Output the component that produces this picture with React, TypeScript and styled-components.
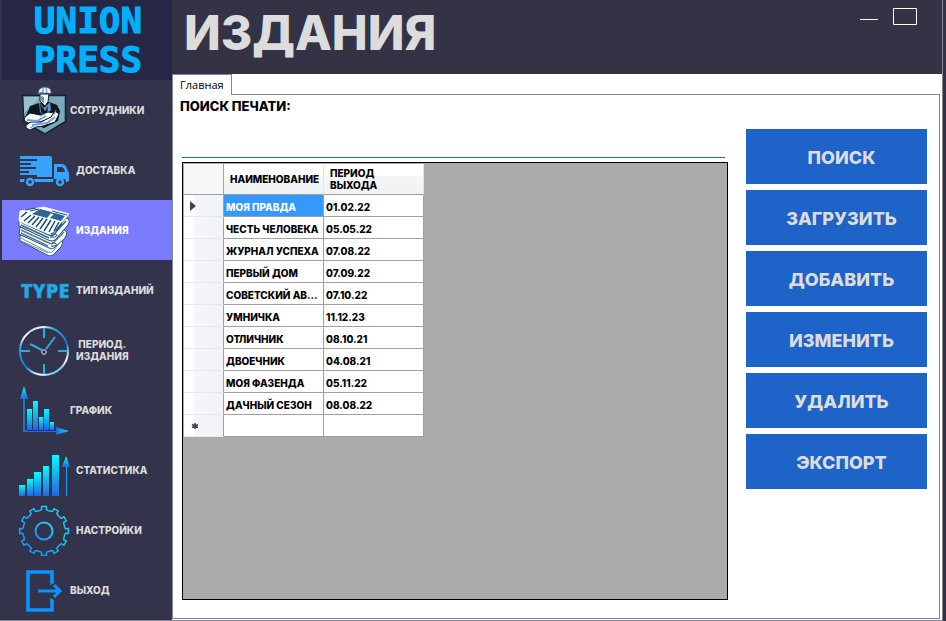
import React from "react";
import styled, { createGlobalStyle } from "styled-components";

const display = '"Inter", "Liberation Sans", sans-serif';

const GlobalStyle = createGlobalStyle`
  * { box-sizing: border-box; }
  body { margin: 0; background: #333345; font-family: ${display}; }
  button, input { font-family: inherit; }
`;

const Window = styled.div`
  display: flex;
  min-height: 100vh;
  padding: 0 3px 1px 0;
  background: #333345;
`;
const Sidebar = styled.aside`
  flex: 0 0 172px;
  display: flex;
  flex-direction: column;
  padding-left: 2px;
  border-bottom: 1px solid #85858f;
  background: #33334b;
`;
const Brand = styled.div`
  height: 80px;
  padding: 1px 0 0 2px;
  background: #262645;
  color: #00b0ff;
  font: 700 36px/39px "DejaVu Sans Mono", monospace;
  text-align: center;
  -webkit-text-stroke: 1px #00b0ff;
`;
const BrandLine = styled.div``;
const Nav = styled.nav`
  display: flex;
  flex-direction: column;
`;
const NavButton = styled.button<{ $active?: boolean }>`
  display: flex;
  align-items: center;
  height: 60px;
  padding: 0 0 0 16px;
  border: 0;
  background: ${(p) => (p.$active ? "#7b7bff" : "transparent")};
  color: ${(p) => (p.$active ? "#ffffff" : "#dcdcdc")};
  text-align: center;
  svg { flex: none; }
`;
const NavLabel = styled.span<{ $near?: boolean }>`
  margin-left: ${(p) => (p.$near ? 0 : 6)}px;
  font-size: 10px;
  font-weight: 800;
  line-height: 12px;
  white-space: pre-line;
`;
const Main = styled.main`
  flex: 1;
  min-width: 0;
  display: flex;
  flex-direction: column;
  border-right: 1px solid #85858f;
  border-bottom: 1px solid #85858f;
`;
const Header = styled.header`
  display: flex;
  justify-content: space-between;
  height: 74px;
  padding: 0 25px 0 12px;
`;
const Title = styled.h1`
  margin: 0;
  color: #dcdcdc;
  font-size: 48px;
  font-weight: 800;
  line-height: 66px;
`;
const WindowControls = styled.div`
  display: flex;
  gap: 15px;
  padding-top: 8px;
`;
const WindowButton = styled.button`
  height: 17px;
  padding: 0;
  border: 0;
  background: none;
  svg { display: block; }
`;
const Tabs = styled.section`
  flex: 1;
  display: flex;
  flex-direction: column;
  padding: 0 2px 1px 0;
  background: #fff;
`;
const TabStrip = styled.div`
  display: flex;
`;
const Tab = styled.button`
  height: 21px;
  margin-bottom: -1px;
  padding: 0 7px;
  border: 1px solid #828790;
  border-bottom: 0;
  background: #fff;
  color: #000;
  font: 11px/18px "Open Sans", "Noto Sans", sans-serif;
  z-index: 1;
`;
const Panel = styled.div`
  flex: 1;
  display: flex;
  padding: 0 12px 18px 7px;
  gap: 18px;
  border: 1px solid #828790;
`;
const Content = styled.div`
  flex: 1;
  min-width: 0;
  display: flex;
  flex-direction: column;
`;
const SearchLabel = styled.label`
  padding-top: 3px;
  font-size: 13px;
  font-weight: 800;
  line-height: 16px;
`;
const SearchInput = styled.input`
  width: calc(100% - 5px);
  height: 44px;
  margin: 0 2px 4px;
  padding: 20px 0 0;
  border: 0;
  border-bottom: 1px solid #1e63c8;
  outline: 0;
  font-size: 13px;
  font-weight: 800;
`;
const GridArea = styled.div`
  flex: 1;
  margin-left: 2px;
  padding: 1px;
  border: 1px solid #000;
  background: #ababab;
`;
const Table = styled.table`
  width: 240px;
  table-layout: fixed;
  border-collapse: separate;
  border-spacing: 0;
  font-size: 10px;
  font-weight: 800;
  line-height: 12px;
`;
const HeadCell = styled.th`
  height: 31px;
  padding: 0 0 0 6px;
  border-right: 1px solid #e2e4e8;
  border-bottom: 1px solid #a0a0a0;
  background: linear-gradient(#fff 0 40%, #f5f6f8 41%, #f0f1f3);
  text-align: left;
  font-weight: 800;
`;
const CornerCell = styled.td`
  border-right: 1px solid #a0a0a0;
  border-bottom: 1px solid #a0a0a0;
  background: #f6f7f9;
`;
const MarkCell = styled.td`
  height: 22px;
  padding: 0 0 0 6px;
  border-right: 1px solid #a0a0a0;
  border-bottom: 1px solid #e6e8ec;
  background: linear-gradient(90deg, #fff 0 25%, #f5f6f9 26%, #f2f3f6);
  svg { display: block; }
`;
const Cell = styled.td<{ $selected?: boolean }>`
  height: 22px;
  padding: 2px 0 0 2px;
  border-right: 1px solid #a0a0a0;
  border-bottom: 1px solid #a0a0a0;
  background: ${(p) => (p.$selected ? "#3399ff" : "#fff")};
  color: ${(p) => (p.$selected ? "#fff" : "#000")};
  white-space: nowrap;
`;
const Actions = styled.div`
  flex: 0 0 181px;
  display: flex;
  flex-direction: column;
  gap: 6px;
  padding-top: 34px;
`;
const ActionButton = styled.button`
  height: 55px;
  padding: 2px 0 0 10px;
  border: 0;
  background: #1e63c8;
  color: #dcdcdc;
  font-size: 18px;
  font-weight: 800;
`;

const Worker = () => (
  <svg width="52" height="52" viewBox="0 0 52 52">
    <path d="M4.500 11.500h43v26L27 50 6 38z" fill="#79a9bd" stroke="#17232c" strokeWidth="1.5" />
    <path d="M6 13h16L6 30z" fill="#98bfce" />
    <path d="m21 19-9 3-5 12 4 5 15 5 14-7 2-10-3-6-8-3z" fill="#10161e" />
    <path d="m21 18 5 6 6-6 1 8-6 7-5-5z" fill="#5c96cf" />
    <path d="m22 20 5 7 3-5-1 8-2 2-4-4z" fill="#10161e" />
    <path d="M22 10h9l-1 8-3 4-5-5z" fill="#f3f5f6" stroke="#10161e" />
    <path d="m23 12 3 1v7l-3-4z" fill="#6095bc" />
    <path d="M20 10q0-7 7-7t6 7l-4-1z" fill="#eef3f5" stroke="#355775" />
    <path d="M25 3v5m-4 1 5-1m2-4 1 4" stroke="#5681a5" />
    <path d="m7 33 5-4 10 2 8-3 7 1-2 4-13 5-12 1-4-3z" fill="#fff" stroke="#10161e" />
    <path d="m8 41 5-3 10 0 10-5 4-6 4 3-4 8-12 4-7 1-6 3-4-2z" fill="#fff" stroke="#10161e" />
    <path d="m9 36 10 1 9-5m-14 9 15-2 8-6" fill="none" stroke="#67a3dd" strokeWidth="2" />
    <path d="m7 29 4-4m27 1-2 5M22 32l5-2m-15 14 4-2" stroke="#4f91d0" />
  </svg>
);

const Truck = () => (
  <svg width="52" height="52" viewBox="0 -1 52 52" fill="#35a3ff">
    <path d="M2 11h30q2 0 2 2v19H19v-2H2v-2h9v-2H2v-2h16v-2H2v-2h11v-2H2v-2h17v-2H2zM36 19h7q5 0 6 5l2 4v6H36zM2 34h5a6 6 0 0 0-1 3H2zm14 0h20a6 6 0 0 0-1 3H17zm31 0h4v2l-2 1h-1z" />
    <path d="M39 22h4q3 0 4 5h-8z" fill="#33334b" />
    <circle cx="12" cy="37" r="3" fill="none" stroke="#35a3ff" strokeWidth="2.5" />
    <circle cx="42" cy="37" r="3" fill="none" stroke="#35a3ff" strokeWidth="2.5" />
  </svg>
);

const Papers = () => (
  <svg width="52" height="52" viewBox="0 0 52 52" strokeLinejoin="round">
    <path d="M2 31 35 43l7-8q5 0 1 8l-8 8q-3 2-6 0L2 37z" fill="#fff" stroke="#245576" />
    <path d="m3 34 27 14q4 2 6-2l6-8M3 37l27 12" fill="none" stroke="#6c91a5" />
    <path d="m2 23 32 14 12-11q5 1 1 8L36 44q-3 2-7-1L1 30z" fill="#fff" stroke="#245576" />
    <path d="m3 26 28 13q4 2 6-2l9-9M3 29l27 13" fill="none" stroke="#537d98" strokeWidth="1.5" />
    <path d="m1 16 33 14 14-16q5 1 2 7L37 36q-3 2-7 0L1 22z" fill="#fff" stroke="#245576" />
    <path d="m3 18 28 13q4 2 6-2l11-12M3 21l28 13" fill="none" stroke="#33688b" strokeWidth="1.5" />
    <path d="m2 7 24-4 25 7-16 18-4 2L1 17z" fill="#fff" stroke="#edf4f5" />
    <path d="m22 5 12 3-5 6-15-4z" fill="#2f6596" />
    <path d="m37 9 10 3-4 5-11-3z" fill="#2f6596" />
    <path d="m9 8-6 5m10-2-7 6m11-5-7 7m11-6-7 8m11-7-7 9m11-8-7 10m11-9-7 11m11-10-6 11m10-10-5 9m8-8-6 8" fill="none" stroke="#174d70" strokeWidth="1.5" />
    <path d="m7 6 11-2m-6 3 9-2m13 2 15 4m-16-2 4 1" stroke="#174d70" />
    <path d="M33 30h4q4 1 0 3h-5m2 6h3q3 1 0 3h-4" fill="none" stroke="#174d70" />
  </svg>
);

const TypeMark = () => (
  <svg width="52" height="52" viewBox="0 0 52 52">
    <text x="27" y="34" textAnchor="middle" fontFamily="Open Sans" fontWeight="800" fontSize="20" fill="#29a9e5" stroke="#148fd1" strokeWidth="0.5">TYPE</text>
  </svg>
);

const Clock = () => (
  <svg width="52" height="52" viewBox="0 -1 52 52" fill="none">
    <defs>
      <linearGradient id="ring" x1="0.2" y1="0" x2="0.75" y2="1">
        <stop offset="0" stopColor="#169bd8" /><stop offset="0.1" stopColor="#fff" />
        <stop offset="0.24" stopColor="#27a9e1" /><stop offset="0.6" stopColor="#0878c8" />
        <stop offset="0.85" stopColor="#fff" /><stop offset="1" stopColor="#29a9e1" />
      </linearGradient>
    </defs>
    <circle cx="26" cy="26" r="24" stroke="url(#ring)" strokeWidth="2" />
    <path d="M26 3v10m0 26v10M3 26h9m28 0h9M12 19l12 6m4-1 9-12" stroke="#2babe3" strokeWidth="2" />
    <circle cx="26" cy="27" r="2.3" stroke="#d7edfa" />
  </svg>
);

const BarDefs = ({ id }: { id: string }) => (
  <defs>
    <linearGradient id={id} x1="0" y1="0" x2="0" y2="1">
      <stop stopColor="#00ffff" /><stop offset="1" stopColor="#2464df" />
    </linearGradient>
  </defs>
);

const Chart = () => (
  <svg width="52" height="52" viewBox="0 0 52 52">
    <BarDefs id="chart" />
    <defs>
      <linearGradient id="chartArrow"><stop stopColor="#2464df" /><stop offset="1" stopColor="#00e5ff" /></linearGradient>
    </defs>
    <path d="M6 15v32h33" fill="none" stroke="#178ee1" strokeWidth="1.5" />
    <path d="M8 46.500h30" stroke="#1527bc" />
    <path d="m6 2 4 13H2z" fill="url(#chart)" />
    <path d="m51 47-13-4v8z" fill="url(#chartArrow)" />
    <path d="M9 25h5v21H9z" fill="url(#chart)" /><path d="M15 17h5v29h-5z" fill="url(#chart)" />
    <path d="M21 33h4v13h-4z" fill="url(#chart)" /><path d="M26 25h5v21h-5z" fill="url(#chart)" />
    <path d="M32 38h4v8h-4z" fill="url(#chart)" />
  </svg>
);

const Stats = () => (
  <svg width="52" height="52" viewBox="0 -1 52 52">
    <BarDefs id="stats" />
    <path d="M1 40h6v11H1z" fill="url(#stats)" /><path d="M9 34h6v17H9z" fill="url(#stats)" />
    <path d="M16 27h7v24h-7z" fill="url(#stats)" /><path d="M25 21h6v30h-6z" fill="url(#stats)" />
    <path d="M34 10h7v41h-7z" fill="url(#stats)" /><path d="m48 11 4 11h-8z" fill="url(#stats)" />
    <path d="M48.500 21v30" stroke="#119aff" />
  </svg>
);

const gearPath = (() => {
  const points: string[] = [];
  for (let i = 0; i < 12; i++) {
    const base = (i * Math.PI) / 6;
    [[-0.19, 21], [-0.11, 21.5], [-0.1, 24.5], [0.1, 24.5], [0.11, 21.5], [0.19, 21]].forEach(([a, r]) => {
      points.push(`${(26 + r * Math.sin(base + a)).toFixed(2)} ${(26 - r * Math.cos(base + a)).toFixed(2)}`);
    });
  }
  return `M${points.join("L")}Z`;
})();

const Gear = () => (
  <svg width="52" height="52" viewBox="0 -1 52 52" fill="none">
    <defs>
      <linearGradient id="gear" x1="1" y1="0" x2="0" y2="1">
        <stop stopColor="#20d8ee" /><stop offset="1" stopColor="#168bff" />
      </linearGradient>
    </defs>
    <path d={gearPath} stroke="url(#gear)" strokeWidth="1.5" strokeLinejoin="round" />
    <circle cx="26" cy="26" r="8.5" stroke="url(#gear)" strokeWidth="2" />
  </svg>
);

const Exit = () => (
  <svg width="52" height="52" viewBox="0 0 52 52" fill="none" stroke="#0b93ff">
    <path d="m35.500 17-1.500 1V8H10v38h24v-9l1.500 1" strokeWidth="3.5" />
    <path d="M20 27h22m-6-6 6 6-6 6" strokeWidth="3" />
  </svg>
);

const navItems = [
  { label: "СОТРУДНИКИ", icon: Worker, near: true },
  { label: "ДОСТАВКА", icon: Truck },
  { label: "ИЗДАНИЯ", icon: Papers, active: true },
  { label: "ТИП ИЗДАНИЙ", icon: TypeMark },
  { label: "ПЕРИОД.\nИЗДАНИЯ", icon: Clock },
  { label: "ГРАФИК", icon: Chart, near: true },
  { label: "СТАТИСТИКА", icon: Stats },
  { label: "НАСТРОЙКИ", icon: Gear },
  { label: "ВЫХОД", icon: Exit, near: true },
];

const rows = [
  ["МОЯ ПРАВДА", "01.02.22"],
  ["ЧЕСТЬ ЧЕЛОВЕКА", "05.05.22"],
  ["ЖУРНАЛ УСПЕХА", "07.08.22"],
  ["ПЕРВЫЙ ДОМ", "07.09.22"],
  ["СОВЕТСКИЙ АВ...", "07.10.22"],
  ["УМНИЧКА", "11.12.23"],
  ["ОТЛИЧНИК", "08.10.21"],
  ["ДВОЕЧНИК", "04.08.21"],
  ["МОЯ ФАЗЕНДА", "05.11.22"],
  ["ДАЧНЫЙ СЕЗОН", "08.08.22"],
];

const actions = ["ПОИСК", "ЗАГРУЗИТЬ", "ДОБАВИТЬ", "ИЗМЕНИТЬ", "УДАЛИТЬ", "ЭКСПОРТ"];

export default function App() {
  return (
    <>
      <GlobalStyle />
      <Window>
        <Sidebar>
          <Brand><BrandLine>UNION</BrandLine><BrandLine>PRESS</BrandLine></Brand>
          <Nav>
            {navItems.map(({ label, icon: Icon, active, near }) => (
              <NavButton key={label} $active={active}>
                <Icon />
                <NavLabel $near={near}>{label}</NavLabel>
              </NavButton>
            ))}
          </Nav>
        </Sidebar>
        <Main>
          <Header>
            <Title>ИЗДАНИЯ</Title>
            <WindowControls>
              <WindowButton aria-label="Свернуть">
                <svg width="18" height="17"><path d="M0 11.5h18" stroke="#fff" /></svg>
              </WindowButton>
              <WindowButton aria-label="Развернуть">
                <svg width="24" height="17"><path d="M.5.5h23v16H.5z" fill="none" stroke="#fff" /></svg>
              </WindowButton>
            </WindowControls>
          </Header>
          <Tabs>
            <TabStrip role="tablist"><Tab role="tab" aria-selected>Главная</Tab></TabStrip>
            <Panel role="tabpanel">
              <Content>
                <SearchLabel htmlFor="search">ПОИСК ПЕЧАТИ:</SearchLabel>
                <SearchInput id="search" />
                <GridArea>
                  <Table>
                    <colgroup><col width="40" /><col width="100" /><col width="100" /></colgroup>
                    <thead>
                      <tr>
                        <CornerCell />
                        <HeadCell>НАИМЕНОВАНИЕ</HeadCell>
                        <HeadCell>ПЕРИОД<br />ВЫХОДА</HeadCell>
                      </tr>
                    </thead>
                    <tbody>
                      {rows.map(([name, date], i) => (
                        <tr key={name}>
                          <MarkCell>{i === 0 && <svg width="6" height="10"><path d="M0 0l6 5-6 5z" fill="#444" /></svg>}</MarkCell>
                          <Cell $selected={i === 0}>{name}</Cell>
                          <Cell>{date}</Cell>
                        </tr>
                      ))}
                      <tr>
                        <MarkCell>
                          <svg width="10" height="8"><path d="M5 1v6M2 2.5l6 3M8 2.500l-6 3" stroke="#444" strokeWidth="1.5" /></svg>
                        </MarkCell>
                        <Cell /><Cell />
                      </tr>
                    </tbody>
                  </Table>
                </GridArea>
              </Content>
              <Actions>
                {actions.map((name) => <ActionButton key={name}>{name}</ActionButton>)}
              </Actions>
            </Panel>
          </Tabs>
        </Main>
      </Window>
    </>
  );
}
